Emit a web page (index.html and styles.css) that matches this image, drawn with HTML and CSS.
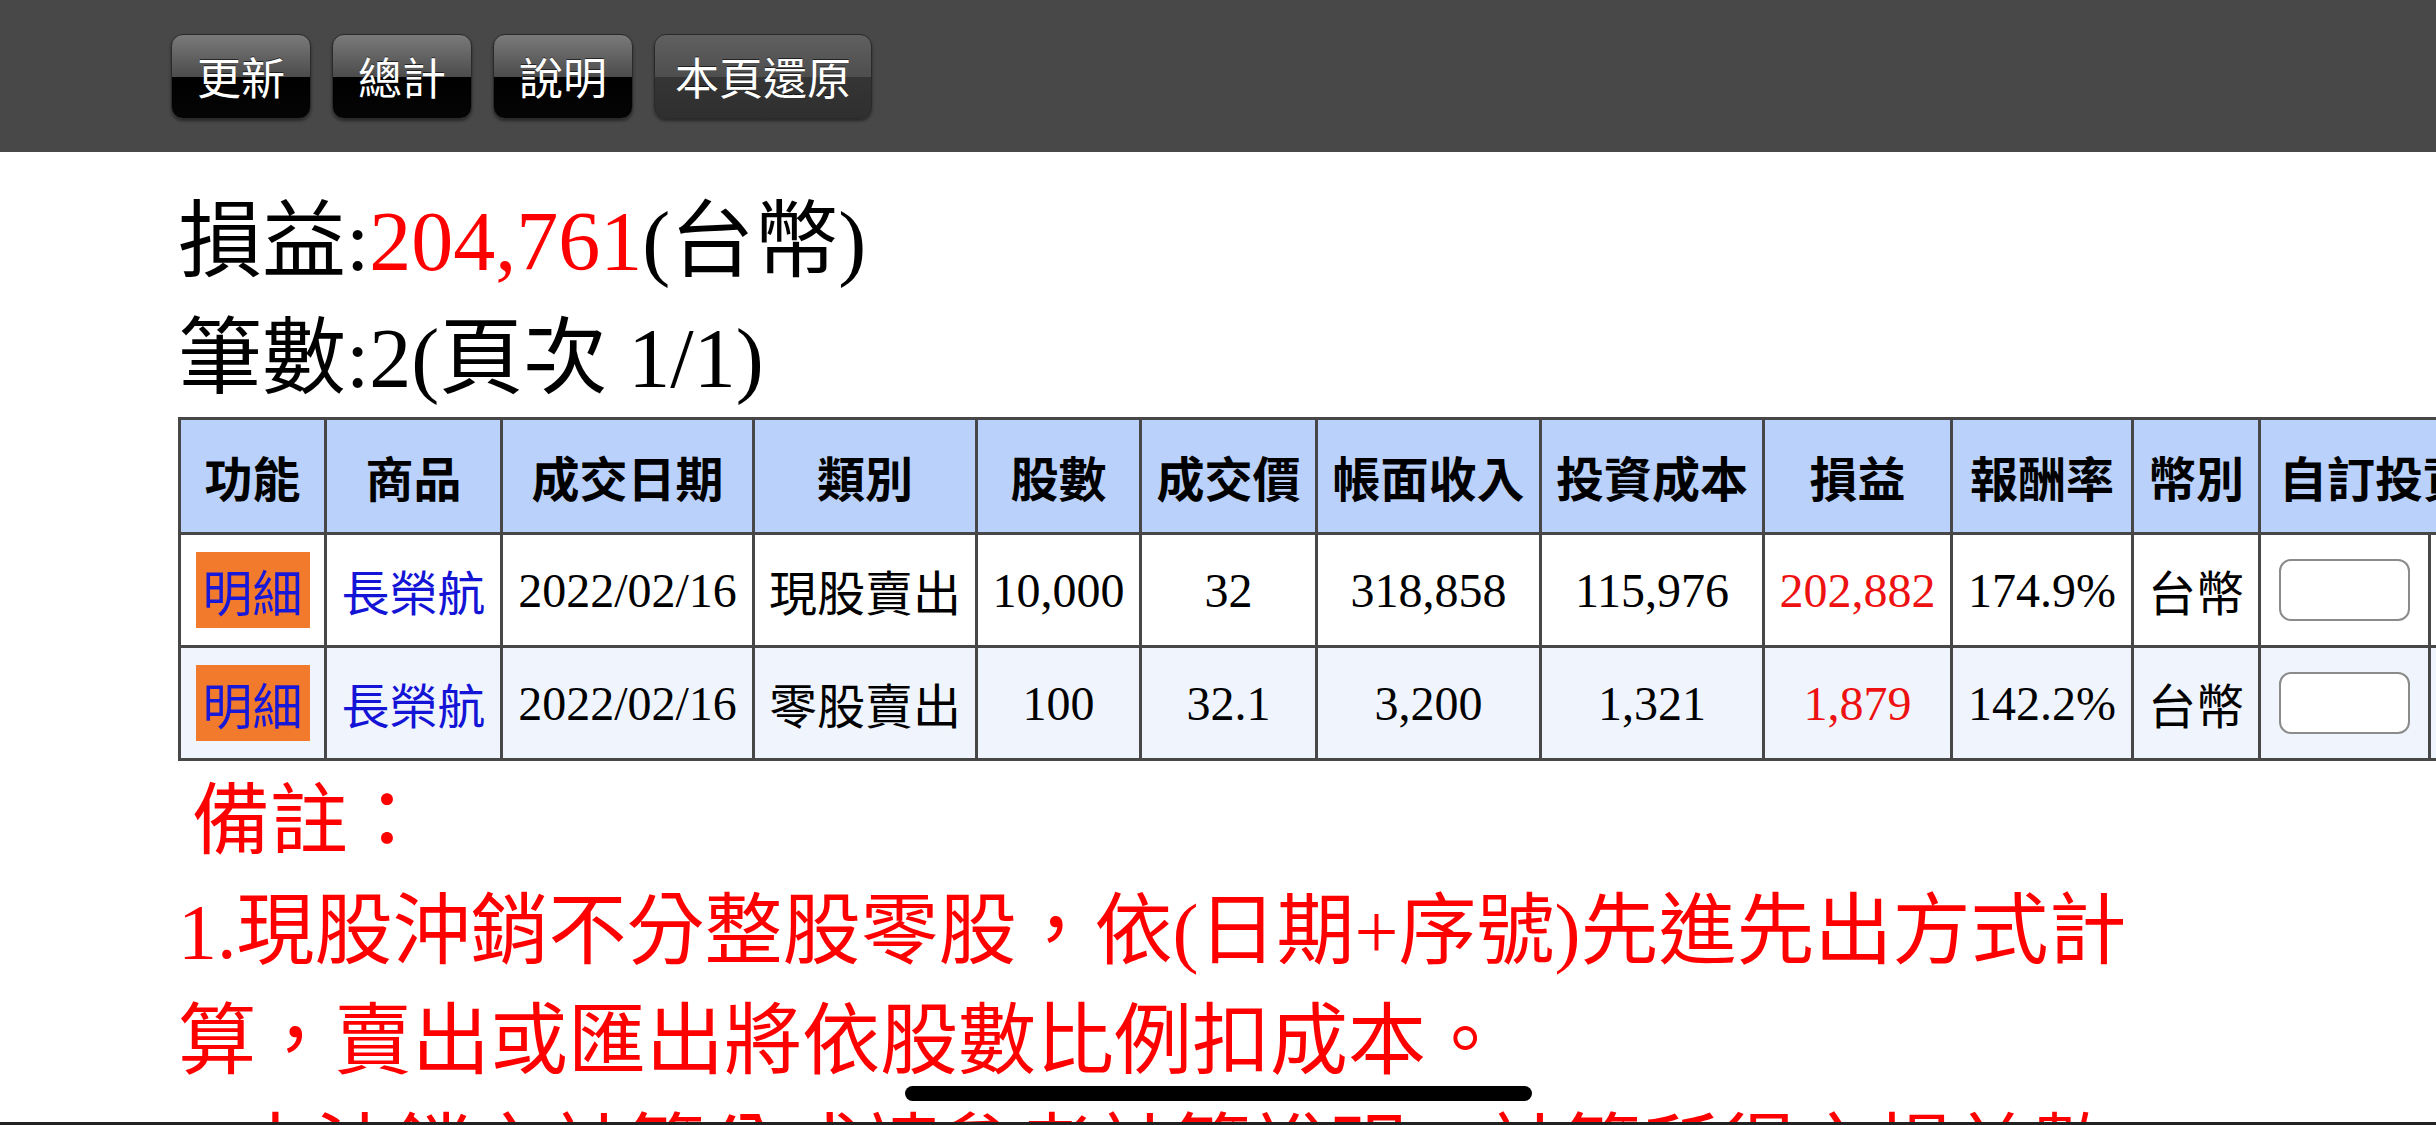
FILE: index.html
```html
<!DOCTYPE html>
<html lang="zh-Hant">
<head>
<meta charset="utf-8">
<title>損益</title>
<link rel="stylesheet" href="styles.css">
</head>
<body>
<div class="topbar">
  <button class="btn">更新</button>
  <button class="btn">總計</button>
  <button class="btn">說明</button>
  <button class="btn alt">本頁還原</button>
</div>
<div class="main">
  <div class="summary">
    <div>損益:<span class="red">204,761</span>(台幣)</div>
    <div>筆數:2(頁次 1/1)</div>
  </div>
  <table class="grid">
    <colgroup>
      <col class="c1"><col class="c2"><col class="c3"><col class="c4"><col class="c5"><col class="c6"><col class="c7"><col class="c8"><col class="c9"><col class="c10"><col class="c11"><col class="c12"><col class="c13">
    </colgroup>
    <thead>
      <tr>
        <th>功能</th><th>商品</th><th>成交日期</th><th>類別</th><th>股數</th><th>成交價</th><th>帳面收入</th><th>投資成本</th><th>損益</th><th>報酬率</th><th>幣別</th><th colspan="2" class="wide">自訂投資成本</th>
      </tr>
    </thead>
    <tbody>
      <tr>
        <td><span class="detail">明細</span></td>
        <td class="link">長榮航</td>
        <td>2022/02/16</td>
        <td>現股賣出</td>
        <td>10,000</td>
        <td>32</td>
        <td>318,858</td>
        <td>115,976</td>
        <td class="red">202,882</td>
        <td>174.9%</td>
        <td>台幣</td>
        <td><input class="cost" type="text"></td>
        <td></td>
      </tr>
      <tr class="alt">
        <td><span class="detail">明細</span></td>
        <td class="link">長榮航</td>
        <td>2022/02/16</td>
        <td>零股賣出</td>
        <td>100</td>
        <td>32.1</td>
        <td>3,200</td>
        <td>1,321</td>
        <td class="red">1,879</td>
        <td>142.2%</td>
        <td>台幣</td>
        <td><input class="cost" type="text"></td>
        <td></td>
      </tr>
    </tbody>
  </table>
  <div class="notes">
    <div class="note-title">備註：</div>
    <div>1.現股沖銷不分整股零股，依(日期+序號)先進先出方式計算，賣出或匯出將依股數比例扣成本。</div>
    <div>2.未沖銷之計算公式請參考計算說明，計算所得之損益數據僅供參考。</div>
  </div>
</div>
<div class="home-indicator"></div>
<div class="bottom-edge"></div>
</body>
</html>
```
FILE: styles.css
```css
html, body {
  margin: 0;
  padding: 0;
  overflow: hidden;
  background: #ffffff;
}
body {
  width: 2436px;
  height: 1125px;
  font-family: "Liberation Serif", "Noto Sans CJK TC", serif;
  color: #000;
}
.topbar {
  height: 152px;
  background: #484848;
  display: flex;
  align-items: center;
  gap: 21px;
  padding-left: 171px;
  box-sizing: border-box;
}
.btn {
  height: 85px;
  padding: 0 25px;
  border-radius: 12px;
  border: 1px solid #2a2a2a;
  color: #ffffff;
  font-family: "Noto Sans CJK TC", sans-serif;
  font-size: 44px;
  line-height: 1;
  background: linear-gradient(#7a7a7a 0%, #4c4c4c 50%, #000000 50%, #050505 100%);
  box-shadow: 0 2px 3px rgba(0,0,0,0.45);
  text-shadow: 0 -1px 0 rgba(0,0,0,0.6);
  cursor: pointer;
}
.btn.alt {
  padding: 0 20px;
  background: linear-gradient(#606060 0%, #4e4e4e 50%, #353535 50%, #2f2f2f 100%);
}
.main {
  padding-left: 178px;
  overflow: hidden;
}
.summary {
  padding-top: 31px;
  font-size: 84px;
  line-height: 117px;
  white-space: nowrap;
}
.red {
  color: #ff0000;
}
.grid {
  border-collapse: collapse;
  table-layout: fixed;
  width: 2410px;
  border: 3px solid #474747;
  font-size: 48px;
}
.c1 { width: 146px; }
.c2 { width: 176px; }
.c3 { width: 252px; }
.c4 { width: 223px; }
.c5 { width: 164px; }
.c6 { width: 176px; }
.c7 { width: 224px; }
.c8 { width: 223px; }
.c9 { width: 188px; }
.c10 { width: 181px; }
.c11 { width: 127px; }
.c12 { width: 170px; }
.c13 { width: 160px; }
.grid th {
  height: 112px;
  padding: 0;
  background: #b9d1fb;
  border: 3px solid #474747;
  font-family: "Noto Sans CJK TC", sans-serif;
  font-weight: 700;
  text-align: center;
  white-space: nowrap;
}
.grid th.wide {
  text-align: left;
  padding-left: 18px;
}
.grid td {
  height: 110px;
  padding: 0;
  border: 3px solid #474747;
  text-align: center;
  white-space: nowrap;
  background: #ffffff;
}
.grid tr.alt td {
  background: #f0f5fd;
}
.grid td.link {
  color: #1414d6;
}
.grid td.red {
  color: #ee1111;
}
.detail {
  display: inline-flex;
  align-items: center;
  justify-content: center;
  width: 114px;
  height: 76px;
  background: #f27a2c;
  color: #1818d8;
  font-family: "Noto Sans CJK TC", sans-serif;
  font-size: 50px;
  line-height: 1;
  vertical-align: middle;
}
.cost {
  display: block;
  margin: 0 auto;
  width: 131px;
  height: 62px;
  box-sizing: border-box;
  border: 2px solid #8b8b8b;
  border-radius: 12px;
  background: #ffffff;
  padding: 0;
}
.notes {
  width: 1990px;
  margin-top: 6px;
  color: #ff0000;
  font-size: 78px;
  line-height: 110px;
}
.note-title {
  padding-left: 14px;
}
.home-indicator {
  position: fixed;
  left: 905px;
  top: 1086px;
  width: 627px;
  height: 15px;
  border-radius: 8px;
  background: #000000;
}
.bottom-edge {
  position: fixed;
  left: 0;
  right: 0;
  bottom: 0;
  height: 3px;
  background: #222222;
}
```
